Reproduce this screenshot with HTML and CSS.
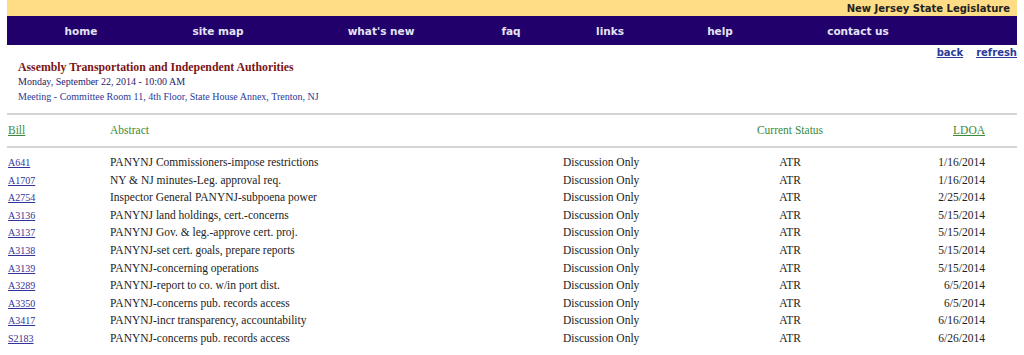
FILE: index.html
```html
<!DOCTYPE html>
<html lang="en">

<head>
  <meta charset="UTF-8" />
  <title>Committee Agenda | New Jersey State Legislature</title>
  <link rel="stylesheet" href="styles.css">
</head>

<body>
  <div class="page">
    <!-- Top banner -->
    <div class="banner">New Jersey State Legislature</div>

    <div class="nav">
      <a href="#">home</a>
      <a href="#">site map</a>
      <a href="#">what's new</a>
      <a href="#">faq</a>
      <a href="#">links</a>
      <a href="#">help</a>
      <a href="#">contact us</a>
      <span></span>
    </div>

    <div class="tools">
      <a href="#">back</a>
      <a href="#">refresh</a>
    </div>

    <div class="meeting">
      <div class="committee">Assembly Transportation and Independent Authorities</div>
      <div class="when">Monday, September 22, 2014 - 10:00 AM</div>
      <div class="where">Meeting - Committee Room 11, 4th Floor, State House Annex, Trenton, NJ</div>
    </div>

    <div class="rule"></div>

    <div class="row head">
      <a href="#">Bill</a>
      <span>Abstract</span>
      <span></span>
      <span class="status">Current Status</span>
      <a href="#" class="date">LDOA</a>
    </div>

    <div class="rule"></div>

    <div class="bills">
      <div class="row"><a href="#">A641</a><span>PANYNJ Commissioners-impose restrictions</span><span>Discussion Only</span><span class="status">ATR</span><span class="date">1/16/2014</span></div>
      <div class="row"><a href="#">A1707</a><span>NY &amp; NJ minutes-Leg. approval req.</span><span>Discussion Only</span><span class="status">ATR</span><span class="date">1/16/2014</span></div>
      <div class="row"><a href="#">A2754</a><span>Inspector General PANYNJ-subpoena power</span><span>Discussion Only</span><span class="status">ATR</span><span class="date">2/25/2014</span></div>
      <div class="row"><a href="#">A3136</a><span>PANYNJ land holdings, cert.-concerns</span><span>Discussion Only</span><span class="status">ATR</span><span class="date">5/15/2014</span></div>
      <div class="row"><a href="#">A3137</a><span>PANYNJ Gov. &amp; leg.-approve cert. proj.</span><span>Discussion Only</span><span class="status">ATR</span><span class="date">5/15/2014</span></div>
      <div class="row"><a href="#">A3138</a><span>PANYNJ-set cert. goals, prepare reports</span><span>Discussion Only</span><span class="status">ATR</span><span class="date">5/15/2014</span></div>
      <div class="row"><a href="#">A3139</a><span>PANYNJ-concerning operations</span><span>Discussion Only</span><span class="status">ATR</span><span class="date">5/15/2014</span></div>
      <div class="row"><a href="#">A3289</a><span>PANYNJ-report to co. w/in port dist.</span><span>Discussion Only</span><span class="status">ATR</span><span class="date">6/5/2014</span></div>
      <div class="row"><a href="#">A3350</a><span>PANYNJ-concerns pub. records access</span><span>Discussion Only</span><span class="status">ATR</span><span class="date">6/5/2014</span></div>
      <div class="row"><a href="#">A3417</a><span>PANYNJ-incr transparency, accountability</span><span>Discussion Only</span><span class="status">ATR</span><span class="date">6/16/2014</span></div>
      <div class="row"><a href="#">S2183</a><span>PANYNJ-concerns pub. records access</span><span>Discussion Only</span><span class="status">ATR</span><span class="date">6/26/2014</span></div>
    </div>
  </div>
</body>

</html>
```

FILE: styles.css
```css
body {
  margin: 0;
  padding: 0;
  background: #fff;
  font-family: "Liberation Serif", "Times New Roman", serif;
  color: #222;
}

.page {
  padding: 0 7px;
}

.banner {
  height: 16px;
  background-color: #fedd86;
  font-family: "DejaVu Sans", Verdana, sans-serif;
  font-weight: bold;
  font-size: 10px;
  line-height: 17px;
  color: #222;
  text-align: right;
  padding-right: 7px;
}

.nav {
  display: grid;
  grid-template-columns: 148px 126px 200px 60px 138px 82px 194px 1fr;
  height: 29px;
  background-color: #22006b;
  align-items: center;
}

.nav a {
  font-family: "DejaVu Sans", Verdana, sans-serif;
  font-weight: bold;
  font-size: 10.5px;
  color: #e4e4f4;
  text-decoration: none;
  text-align: center;
}

.tools {
  display: flex;
  justify-content: flex-end;
  gap: 13px;
  height: 14px;
  padding-top: 1px;
}

.tools a {
  font-family: "DejaVu Sans", Verdana, sans-serif;
  font-weight: bold;
  font-size: 10px;
  line-height: 14px;
  color: #2a3a9a;
}

.meeting {
  padding-left: 11px;
  height: 53px;
}

.committee {
  font-weight: bold;
  font-size: 11.8px;
  line-height: 14px;
  color: #7a1414;
}

.when {
  font-size: 10px;
  line-height: 15px;
  color: #2a1a6a;
}

.where {
  font-size: 10px;
  line-height: 15px;
  color: #2a3a9a;
}

.rule {
  height: 2px;
  background-color: #d4d4d4;
}

.row {
  display: grid;
  grid-template-columns: 102px 453px 180px 94px 148px;
  padding-left: 1px;
  font-size: 11.5px;
  height: 17.6px;
  line-height: 17.6px;
  align-items: center;
}

.row a {
  font-size: 10px;
  color: #33339a;
}

.row .status {
  text-align: center;
}

.row .date {
  text-align: right;
}

.head {
  height: 31px;
  color: #3a8a3a;
  font-size: 11.5px;
}

.head a {
  color: #3a8a3a;
  font-size: 11.5px;
}

.bills {
  padding-top: 6px;
}
```
